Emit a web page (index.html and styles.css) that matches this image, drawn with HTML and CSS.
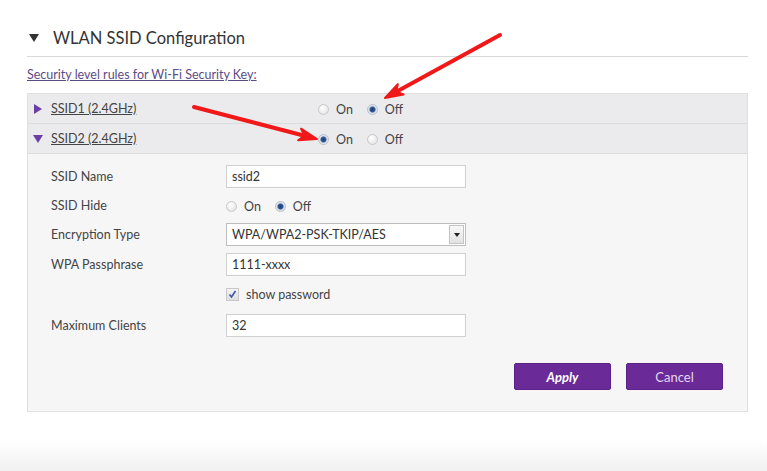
FILE: index.html
```html
<!DOCTYPE html>
<html>
<head>
<meta charset="utf-8">
<link rel="stylesheet" href="styles.css">
</head>
<body>
<div class="page">
  <h2 class="title"><span class="tri-down dark"></span>WLAN SSID Configuration</h2>
  <a class="rules" href="#">Security level rules for Wi-Fi Security Key:</a>
  <div class="panel">
    <div class="head-row">
      <span class="tri-right"></span>
      <a class="ssid-link" href="#">SSID1 (2.4GHz)</a>
      <div class="radios">
        <span class="radio"></span><span class="rl">On</span>
        <span class="radio checked"></span><span class="rl">Off</span>
      </div>
    </div>
    <div class="head-row">
      <span class="tri-down purple"></span>
      <a class="ssid-link" href="#">SSID2 (2.4GHz)</a>
      <div class="radios">
        <span class="radio checked"></span><span class="rl">On</span>
        <span class="radio"></span><span class="rl">Off</span>
      </div>
    </div>
    <div class="body">
      <div class="form">
        <div class="lbl">SSID Name</div>
        <div class="field"><div class="input">ssid2</div></div>

        <div class="lbl">SSID Hide</div>
        <div class="field radios">
          <span class="radio"></span><span class="rl">On</span>
          <span class="radio checked"></span><span class="rl">Off</span>
        </div>

        <div class="lbl">Encryption Type</div>
        <div class="field"><div class="input select"><span>WPA/WPA2-PSK-TKIP/AES</span><span class="drop"><span class="drop-tri"></span></span></div></div>

        <div class="lbl">WPA Passphrase</div>
        <div class="field"><div class="input">1111-xxxx</div></div>

        <div class="lbl"></div>
        <div class="field check-row">
          <span class="checkbox"><svg width="11" height="11" viewBox="0 0 11 11"><path d="M2.5 5.5 L4.5 8 L8.5 2" fill="none" stroke="#3b5aa0" stroke-width="1.6"/></svg></span>
          <span>show password</span>
        </div>

        <div class="lbl">Maximum Clients</div>
        <div class="field"><div class="input">32</div></div>
      </div>
      <div class="buttons">
        <button class="btn apply">Apply</button>
        <button class="btn cancel">Cancel</button>
      </div>
    </div>
  </div>
</div>
<svg class="arrows" width="767" height="471" viewBox="0 0 767 471">
  <line x1="500" y1="35" x2="396.4" y2="91.7" stroke="#f01818" stroke-width="4" stroke-linecap="round"/>
  <polygon points="385,98 403.6,94.5 396.4,91.7 397.8,84.1" fill="#f01818" stroke="#f01818" stroke-width="2" stroke-linejoin="round"/>
  <line x1="194" y1="107" x2="304.4" y2="135.7" stroke="#f01818" stroke-width="4" stroke-linecap="round"/>
  <polygon points="317,139 298.1,140.3 304.4,135.7 301.1,128.7" fill="#f01818" stroke="#f01818" stroke-width="2" stroke-linejoin="round"/>
</svg>
</body>
</html>
```

FILE: styles.css
```css
html, body {
  margin: 0;
  padding: 0;
}
body {
  width: 767px;
  height: 471px;
  overflow: hidden;
  position: relative;
  font-family: "Lato", "Noto Sans", sans-serif;
  color: #444;
  background: linear-gradient(to bottom, #ffffff 0, #ffffff 440px, #f0f0f0 471px);
}
.page {
  padding: 26px 19px 0 27px;
}
.title {
  margin: 0;
  font-size: 16.5px;
  font-weight: normal;
  color: #333;
  display: flex;
  align-items: center;
  height: 24px;
  padding-bottom: 6px;
  border-bottom: 1px solid #d8d8d8;
}
.tri-down {
  width: 0;
  height: 0;
  border-left: 5px solid transparent;
  border-right: 5px solid transparent;
  border-top: 8px solid #333;
  display: inline-block;
}
.tri-down.dark {
  margin: 0 14px 0 2px;
}
.tri-down.purple {
  border-top-color: #6b3fa6;
  margin-left: 5px;
}
.tri-right {
  width: 0;
  height: 0;
  border-top: 5px solid transparent;
  border-bottom: 5px solid transparent;
  border-left: 8px solid #6b3fa6;
  display: inline-block;
  margin-left: 6px;
}
.rules {
  display: block;
  margin-top: 10px;
  font-size: 12.5px;
  color: #5c4c86;
  line-height: 16px;
}
.panel {
  margin-top: 10px;
  border: 1px solid #e0e0e0;
  background: #f6f6f7;
}
.head-row {
  display: grid;
  grid-template-columns: 23px 267px auto;
  align-items: center;
  height: 29px;
  background: #ebebed;
  border-bottom: 1px solid #dcdcdc;
}
.ssid-link {
  font-size: 12.5px;
  color: #444;
}
.radios {
  display: flex;
  align-items: center;
  font-size: 12.5px;
  color: #444;
  padding-top: 2px;
}
.radio {
  width: 11px;
  height: 11px;
  border-radius: 50%;
  border: 1px solid #c8c8c8;
  background: radial-gradient(circle at 40% 35%, #ffffff, #dedede);
  box-sizing: border-box;
  display: inline-block;
  margin-right: 7px;
}
.radio.checked {
  border-color: #b8c0cc;
  background: radial-gradient(circle, #1f3d6e 0, #2f5a9a 2.5px, #d8dde6 3.5px, #eef0f4 5.5px);
}
.rl {
  margin-right: 14px;
}
.body {
  padding: 8px 24px 21px 23px;
}
.form {
  display: grid;
  grid-template-columns: 175px 240px;
  grid-template-rows: 29px 29px 29px 30px 31px 30px;
  align-items: center;
  font-size: 12.5px;
}
.lbl {
  color: #444;
}
.input {
  box-sizing: border-box;
  height: 23px;
  width: 240px;
  border: 1px solid #d0d0d0;
  background: #fff;
  font-size: 12.5px;
  color: #333;
  padding: 0 5px;
  display: flex;
  align-items: center;
}
.select {
  justify-content: space-between;
  padding-right: 1px;
  border-color: #bdbdbd;
}
.drop {
  width: 15px;
  height: 19px;
  border: 1px solid #c4c4c4;
  box-sizing: border-box;
  background: linear-gradient(#f8f8f8, #e2e2e2);
  display: flex;
  align-items: center;
  justify-content: center;
}
.drop-tri {
  width: 0;
  height: 0;
  border-left: 3px solid transparent;
  border-right: 3px solid transparent;
  border-top: 4px solid #222;
}
.check-row {
  display: flex;
  align-items: center;
  gap: 7px;
  color: #444;
}
.checkbox {
  width: 11px;
  height: 11px;
  border: 1px solid #c8c8c8;
  background: linear-gradient(#f4f4f4, #dedede);
  display: flex;
}
.checkbox svg {
  display: block;
}
.buttons {
  display: flex;
  justify-content: flex-end;
  gap: 15px;
  margin-top: 23px;
}
.btn {
  width: 97px;
  height: 27px;
  border: 1px solid #5a2185;
  border-radius: 2px;
  background: #6a2a98;
  color: #fff;
  font-family: "Lato", "Noto Sans", sans-serif;
  font-size: 13px;
  padding: 0;
}
.btn.apply {
  font-weight: bold;
  font-style: italic;
}
.btn.cancel {
  color: #e6d6ee;
}
.arrows {
  position: absolute;
  left: 0;
  top: 0;
  pointer-events: none;
}
```
